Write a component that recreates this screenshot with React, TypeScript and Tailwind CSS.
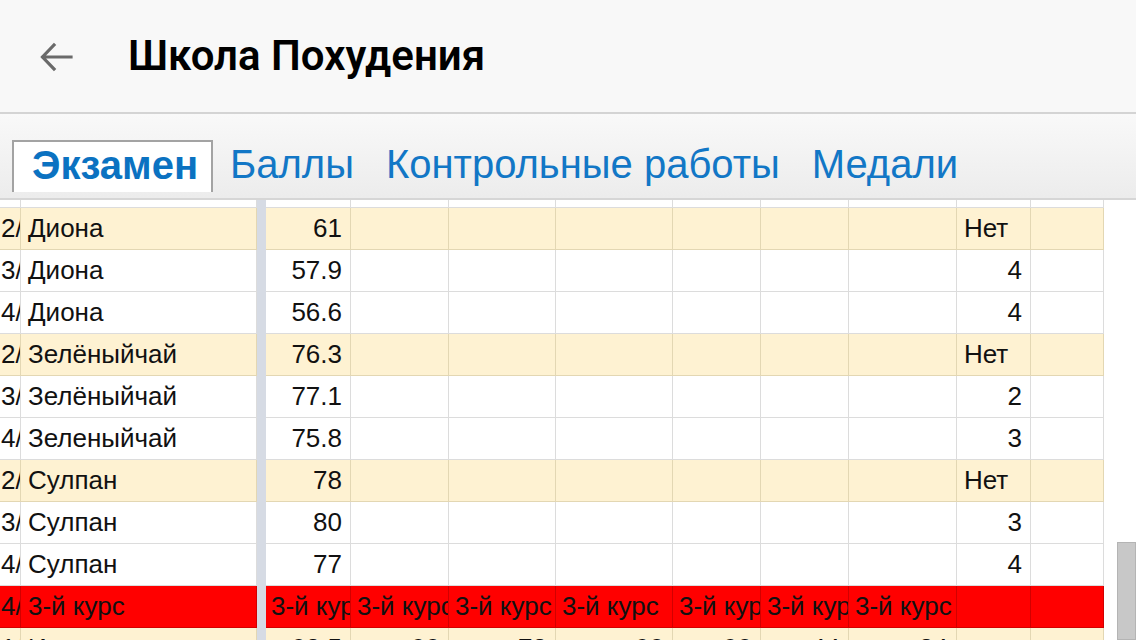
import React from 'react';

type Row = {
  kind: 'yellow' | 'white' | 'red';
  pre: string;
  name: string;
  score: string;
  grade: string;
  fill?: string[];
};

// widths of the data columns after the frozen part
const colW = ['w-[85px]', 'w-[98px]', 'w-[107px]', 'w-[117px]', 'w-[88px]', 'w-[88px]', 'w-[108px]', 'w-[74px]', 'w-[73px]'];

const rows: Row[] = [
  { kind: 'white', pre: '1/', name: '(…)', score: '', grade: '' },
  { kind: 'yellow', pre: '2/', name: 'Диона', score: '61', grade: 'Нет' },
  { kind: 'white', pre: '3/', name: 'Диона', score: '57.9', grade: '4' },
  { kind: 'white', pre: '4/', name: 'Диона', score: '56.6', grade: '4' },
  { kind: 'yellow', pre: '2/', name: 'Зелёныйчай', score: '76.3', grade: 'Нет' },
  { kind: 'white', pre: '3/', name: 'Зелёныйчай', score: '77.1', grade: '2' },
  { kind: 'white', pre: '4/', name: 'Зеленыйчай', score: '75.8', grade: '3' },
  { kind: 'yellow', pre: '2/', name: 'Сулпан', score: '78', grade: 'Нет' },
  { kind: 'white', pre: '3/', name: 'Сулпан', score: '80', grade: '3' },
  { kind: 'white', pre: '4/', name: 'Сулпан', score: '77', grade: '4' },
  { kind: 'red', pre: '4/', name: '3-й курс', score: '', grade: '' },
  {
    kind: 'yellow',
    pre: '1/',
    name: 'Итого',
    score: '93.5',
    grade: '',
    fill: ['90', '78', '90', '90', '44', '84'],
  },
];

const rowBg = {
  yellow: 'bg-[#fef2d2] border-[#e3d7b3]',
  white: 'bg-white border-[#dcdcdc]',
  red: 'bg-[#ff0000] border-[#d20000]',
};

function TableRow({ row, first }: { row: Row; first?: boolean }) {
  const cell = `h-[42px] shrink-0 border-r border-b ${rowBg[row.kind]} overflow-hidden whitespace-nowrap flex items-center`;
  const red = row.kind === 'red';
  return (
    <div className={`flex ${first ? '-mt-[34px]' : ''}`}>
      <div className={`${cell} w-[21px] pl-[1px]`}>{row.pre}</div>
      <div className={`${cell} w-[236px] pl-[7px]`}>{row.name}</div>
      <div className="w-[9px] h-[42px] shrink-0 bg-[#d6dbe4]" />
      <div className={`${cell} ${colW[0]} ${red ? 'pl-[5px]' : 'justify-end pr-[8px]'}`}>
        {red ? '3-й курс' : row.score}
      </div>
      {colW.slice(1, 7).map((w, i) => (
        <div key={i} className={`${cell} ${w} ${red ? 'pl-[6px]' : 'justify-end pr-[8px]'}`}>
          {red ? '3-й курс' : row.fill ? row.fill[i] : ''}
        </div>
      ))}
      <div
        className={`${cell} ${colW[7]} ${
          row.grade === 'Нет' ? 'pl-[7px]' : 'justify-end pr-[8px]'
        }`}
      >
        {row.grade}
      </div>
      <div className={`${cell} ${colW[8]}`} />
    </div>
  );
}

export default function App() {
  return (
    <div className="relative w-[1136px] h-[640px] overflow-hidden bg-white flex flex-col font-['Liberation_Sans',Arial,sans-serif]">
      {/* Title bar */}
      <div className="h-[114px] shrink-0 bg-[#f8f8f8] border-b-2 border-[#d4d4d4] flex items-center">
        <svg width="34" height="30" viewBox="0 0 34 30" className="ml-[39px] mt-[1px]">
          <path
            d="M32 15H4M15 3L3.5 15L15 27"
            fill="none"
            stroke="#6a6a6a"
            strokeWidth="3.2"
            strokeLinecap="square"
          />
        </svg>
        <div className="ml-[55px] text-[42px] font-semibold text-black font-['Roboto',Arial,sans-serif] leading-none">
          Школа Похудения
        </div>
      </div>

      {/* Tabs */}
      <div className="h-[86px] shrink-0 bg-gradient-to-b from-[#f9f9f9] to-[#ececec] border-b-2 border-[#d6d6d6] flex items-end pl-[12px]">
        <div className="h-[52px] mb-[6px] pb-[5px] w-[201px] bg-white border-2 border-b-0 border-[#a3a3a3] flex items-center pl-[18px] text-[40px] font-bold text-[#0b72c1] leading-none">
          Экзамен
        </div>
        <div className="h-[52px] mb-[6px] pb-[5px] flex items-center text-[40px] text-[#1277c6] leading-none">
          <span className="ml-[17px]">Баллы</span>
          <span className="ml-[32px]">Контрольные работы</span>
          <span className="ml-[32px]">Медали</span>
        </div>
      </div>

      {/* Table (scrolled) */}
      <div className="flex-1 overflow-hidden text-[26px] text-[#111]">
        {rows.map((r, i) => (
          <TableRow key={i} row={r} first={i === 0} />
        ))}
      </div>

      {/* scrollbar thumb */}
      <div className="absolute right-0 top-[542px] w-[19px] h-[98px] bg-[#c8c8c8] border border-[#b4b4b4]" />
    </div>
  );
}
